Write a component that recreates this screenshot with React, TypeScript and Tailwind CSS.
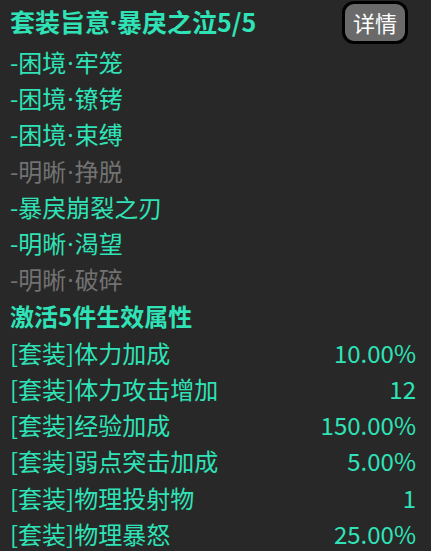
import React from "react";

const items: { a: string; b?: string; active: boolean }[] = [
  { a: "-困境", b: "牢笼", active: true },
  { a: "-困境", b: "镣铐", active: true },
  { a: "-困境", b: "束缚", active: true },
  { a: "-明晰", b: "挣脱", active: false },
  { a: "-暴戾崩裂之刃", active: true },
  { a: "-明晰", b: "渴望", active: true },
  { a: "-明晰", b: "破碎", active: false },
];

const stats: [string, string][] = [
  ["[套装]体力加成", "10.00%"],
  ["[套装]体力攻击增加", "12"],
  ["[套装]经验加成", "150.00%"],
  ["[套装]弱点突击加成", "5.00%"],
  ["[套装]物理投射物", "1"],
  ["[套装]物理暴怒", "25.00%"],
];

function Dot() {
  return <span className="font-['Noto_Sans'] px-[1px]">·</span>;
}

export default function App() {
  return (
    <div
      className="w-[431px] h-[551px] bg-[#282828] overflow-hidden pl-[10px] pr-[15px]"
      style={{ fontFamily: '"Noto Sans CJK SC", "Noto Sans", sans-serif' }}
    >
      <div className="h-[44px] flex items-center justify-between">
        <div className="text-[25px] font-bold text-[#2fe3b7] leading-none">
          套装旨意<span className="font-['Noto_Sans']">·</span>暴戾之泣5/5
        </div>
        <div className="mr-[8px] w-[66px] h-[43px] rounded-[12px] border-[3px] border-black bg-[#6a6a6a] flex items-center justify-center text-white text-[22px] leading-none">
          详情
        </div>
      </div>
      {items.map((it, i) => (
        <div
          key={i}
          className={`h-[36.3px] flex items-center text-[24px] leading-none ${it.active ? "text-[#2fe3b7]" : "text-[#727272]"}`}
        >
          <span>
            {it.a}
            {it.b && (
              <>
                <Dot />
                {it.b}
              </>
            )}
          </span>
        </div>
      ))}
      <div className="h-[36.3px] flex items-center text-[24px] font-bold leading-none text-[#2fe3b7]">激活5件生效属性</div>
      {stats.map(([k, v], i) => (
        <div key={i} className="h-[36.3px] flex items-center justify-between text-[24px] leading-none text-[#2fe3b7]">
          <span>{k}</span>
          <span>{v}</span>
        </div>
      ))}
    </div>
  );
}
